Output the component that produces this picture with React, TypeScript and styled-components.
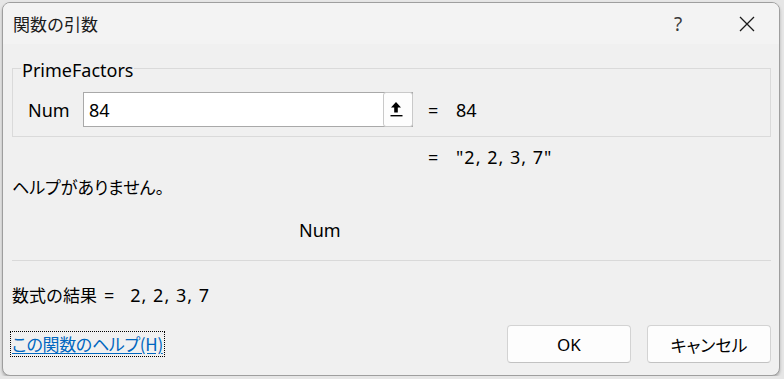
import styled, { createGlobalStyle } from "styled-components";

const GlobalStyle = createGlobalStyle`
  html, body {
    margin: 0;
    padding: 0;
    background: #e6e6e6;
  }
  body {
    font-family: "Noto Sans", "Noto Sans CJK JP", sans-serif;
    color: #000;
  }
`;

const Page = styled.div`
  padding: 2px 0 0 2px;
`;

const Window = styled.div`
  width: 778px;
  height: 374px;
  box-sizing: border-box;
  border: 1px solid #9e9e9e;
  border-radius: 8px;
  overflow: hidden;
  background: #f0f0f0;
  box-shadow: 0 2px 3px rgba(0, 0, 0, 0.25);
  display: flex;
  flex-direction: column;
`;

const TitleBar = styled.div`
  height: 41px;
  flex: none;
  display: flex;
  align-items: center;
  padding-left: 10px;
  background: #f3f3f3;
`;

const Title = styled.div`
  flex: 1;
  font-family: "Noto Sans CJK JP", sans-serif;
  font-size: 17px;
  color: #1a1a1a;
`;

const TitleButton = styled.div<{ $w: number; $mr: number }>`
  width: ${(p) => p.$w}px;
  margin-right: ${(p) => p.$mr}px;
  height: 41px;
  display: flex;
  align-items: center;
  justify-content: center;
  font-size: 19px;
  color: #3a3a3a;
`;

const Body = styled.div`
  flex: 1;
  display: flex;
  flex-direction: column;
  padding: 0 8px 0 9px;
`;

const Group = styled.div`
  margin-top: 24px;
  border: 1px solid #dadada;
  padding-bottom: 9px;
  display: flex;
  flex-direction: column;
  align-items: flex-start;
`;

const Legend = styled.div`
  margin: -11px 0 0 8px;
  padding: 0 1px;
  height: 24px;
  line-height: 24px;
  font-size: 18px;
  background: #f0f0f0;
`;

const ArgRow = styled.div`
  display: flex;
  align-items: center;
  margin-top: 10px;
  padding-left: 15px;
  height: 35px;
`;

const ArgLabel = styled.div`
  width: 55px;
  font-size: 18px;
`;

const InputBox = styled.div`
  width: 330px;
  height: 35px;
  box-sizing: border-box;
  display: flex;
  align-items: center;
  background: #fff;
  border: 1px solid #a9a9a9;
`;

const InputText = styled.div`
  flex: 1;
  padding-left: 5px;
  font-size: 18px;
`;

const RefButton = styled.div`
  width: 30px;
  height: 35px;
  box-sizing: border-box;
  margin-right: -1px;
  padding-right: 3px;
  display: flex;
  align-items: center;
  justify-content: center;
  background: #fdfdfd;
  border: 1px solid #c9c9c9;
  border-radius: 3px;
`;

const Value = styled.div<{ $ml: number }>`
  display: flex;
  align-items: center;
  margin-left: ${(p) => p.$ml}px;
  font-size: 18px;
  line-height: 24px;
`;

const Eq = styled.span`
  width: 28px;
`;

const Spaced = styled.span<{ $ml?: number }>`
  letter-spacing: 1px;
  margin-left: ${(p) => p.$ml ?? 0}px;
`;

const ResultLine = styled(Value)`
  margin-top: 8px;
`;

const HelpText = styled.div`
  margin-top: 6px;
  font-family: "Noto Sans CJK JP", sans-serif;
  font-feature-settings: "palt";
  font-size: 17px;
  line-height: 24px;
`;

const ArgName = styled.div`
  margin: 19px 0 0 287px;
  font-size: 18px;
  line-height: 24px;
`;

const Separator = styled.div`
  margin-top: 18px;
  height: 1px;
  background: #d9d9d9;
`;

const Formula = styled.div`
  margin-top: 22px;
  display: flex;
  align-items: center;
  font-size: 18px;
  line-height: 24px;
`;

const Cjk = styled.span`
  font-family: "Noto Sans CJK JP", sans-serif;
  font-size: 17px;
  margin-right: 7px;
`;

const Footer = styled.div`
  margin-top: 18px;
  height: 38px;
  display: flex;
  align-items: center;
  gap: 16px;
`;

const HelpLink = styled.a`
  margin-left: -2px;
  margin-right: auto;
  padding: 0 1px;
  border: 1px dotted #000;
  line-height: 24px;
  font-family: "Noto Sans CJK JP", sans-serif;
  font-feature-settings: "palt";
  font-size: 17px;
  letter-spacing: -0.3px;
  color: #0067c0;
  text-decoration: underline;
  text-underline-offset: 2px;
`;

const Button = styled.div`
  width: 124px;
  height: 38px;
  box-sizing: border-box;
  display: flex;
  align-items: center;
  justify-content: center;
  background: #fdfdfd;
  border: 1px solid #d3d3d3;
  border-bottom-color: #c2c2c2;
  border-radius: 4px;
  font-family: "Noto Sans", "Noto Sans CJK JP", sans-serif;
  font-feature-settings: "palt";
  font-size: 17px;
`;

const RefIcon = () => (
  <svg width="13" height="15" viewBox="0 0 13 15">
    <polygon points="6,0 11,5.5 7.8,5.5 7.8,10.5 4.2,10.5 4.2,5.5 1,5.5" fill="#000" />
    <rect x="0.5" y="13" width="12" height="1.4" fill="#000" />
  </svg>
);

const CloseIcon = () => (
  <svg width="16" height="16" viewBox="0 0 16 16">
    <path d="M1 1 L15 15 M15 1 L1 15" stroke="#1a1a1a" strokeWidth="1.3" fill="none" />
  </svg>
);

export default function App() {
  return (
    <Page>
      <GlobalStyle />
      <Window>
        <TitleBar>
          <Title>関数の引数</Title>
          <TitleButton $w={40} $mr={24}>?</TitleButton>
          <TitleButton $w={50} $mr={7}>
            <CloseIcon />
          </TitleButton>
        </TitleBar>
        <Body>
          <Group>
            <Legend>PrimeFactors</Legend>
            <ArgRow>
              <ArgLabel>Num</ArgLabel>
              <InputBox>
                <InputText>84</InputText>
                <RefButton>
                  <RefIcon />
                </RefButton>
              </InputBox>
              <Value $ml={15}>
                <Eq>=</Eq>
                <span>84</span>
              </Value>
            </ArgRow>
          </Group>
          <ResultLine $ml={416}>
            <Eq>=</Eq>
            <Spaced>"2, 2, 3, 7"</Spaced>
          </ResultLine>
          <HelpText>ヘルプがありません。</HelpText>
          <ArgName>Num</ArgName>
          <Separator />
          <Formula>
            <Cjk>数式の結果</Cjk>
            <span>=</span>
            <Spaced $ml={16}>2, 2, 3, 7</Spaced>
          </Formula>
          <Footer>
            <HelpLink href="#">この関数のヘルプ(H)</HelpLink>
            <Button>OK</Button>
            <Button>キャンセル</Button>
          </Footer>
        </Body>
      </Window>
    </Page>
  );
}
